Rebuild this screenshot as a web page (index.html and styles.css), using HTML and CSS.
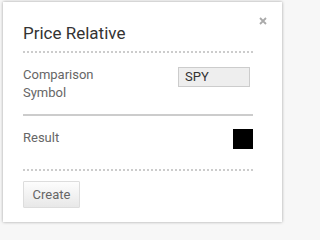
FILE: index.html
```html
<!DOCTYPE html>
<html>
<head>
<meta charset="utf-8">
<link rel="stylesheet" href="styles.css">
</head>
<body>
<div class="dialog">
  <svg class="close" width="8" height="8" viewBox="0 0 8 8"><path d="M1 1L7 7M7 1L1 7" stroke="#aaa" stroke-width="1.8"/></svg>
  <div class="title">Price Relative</div>
  <div class="row row-symbol">
    <div class="label">Comparison<br>Symbol</div>
    <div class="input">SPY</div>
  </div>
  <div class="row row-result">
    <div class="label">Result</div>
    <div class="swatch"></div>
  </div>
  <div class="footer">
    <button class="btn">Create</button>
  </div>
</div>
</body>
</html>
```
FILE: styles.css
```css
html, body {
  margin: 0;
  padding: 0;
  background: #f7f7f7;
  font-family: Roboto, "Liberation Sans", sans-serif;
}
body {
  width: 285px;
  height: 225px;
  overflow: hidden;
  padding-top: 2px;
  padding-left: 3px;
  box-sizing: border-box;
}
.dialog {
  position: relative;
  width: 279px;
  height: 220px;
  box-sizing: border-box;
  padding: 0 29px 0 20px;
  background: #fff;
  box-shadow: 0 0 3px rgba(0, 0, 0, 0.35);
}
.close {
  position: absolute;
  right: 15px;
  top: 15px;
  display: block;
}
.title {
  height: 51px;
  box-sizing: border-box;
  padding-top: 21px;
  font-size: 17px;
  line-height: 20px;
  color: #333;
  border-bottom: 2px dotted #ccc;
}
.row {
  display: flex;
  justify-content: space-between;
  align-items: flex-start;
  box-sizing: border-box;
}
.row-symbol {
  height: 63px;
  padding-top: 14px;
  border-bottom: 2px solid #ccc;
}
.row-result {
  height: 55px;
  padding-top: 13px;
  border-bottom: 2px dotted #ccc;
}
.label {
  font-size: 13px;
  line-height: 18px;
  color: #666;
}
.row-symbol .label {
  margin-top: -1px;
}
.input {
  width: 72px;
  height: 20px;
  margin-right: 3px;
  box-sizing: border-box;
  border: 1px solid #ccc;
  background: #eee;
  padding-left: 6px;
  font-size: 13px;
  line-height: 18px;
  color: #333;
}
.swatch {
  width: 20px;
  height: 20px;
  background: #000;
}
.footer {
  padding-top: 10px;
}
.btn {
  width: 57px;
  height: 27px;
  margin: 0;
  padding: 0;
  border: 1px solid #ddd;
  border-radius: 1px;
  background: linear-gradient(#fdfdfd, #e8e8e8);
  font-family: Roboto, "Liberation Sans", sans-serif;
  font-size: 13px;
  color: #666;
}
```
